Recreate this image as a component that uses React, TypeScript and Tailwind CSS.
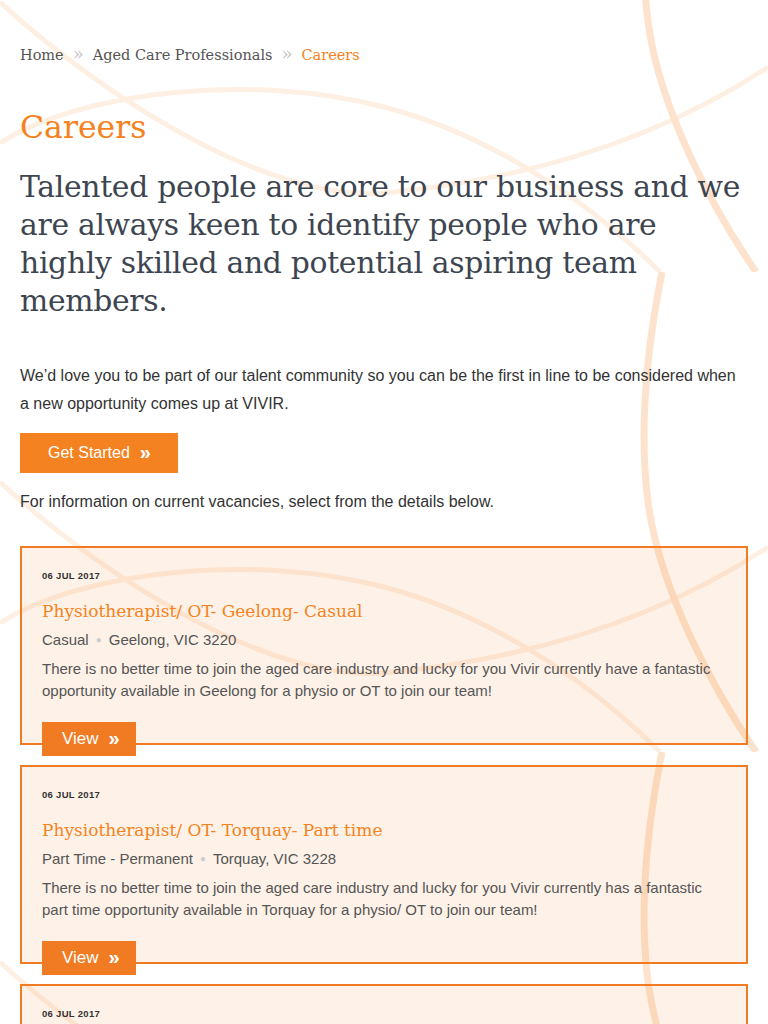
import React from "react";

const slab = "font-['DejaVu_Serif','Liberation_Serif',serif]";
const sans = "font-['Liberation_Sans',Arial,sans-serif]";

interface jobTypes {
  id: number,
  date: string,
  title: string,
  type: string,
  place: string,
  desc: string
}

const jobs: jobTypes[] = [
  {
    id: 1,
    date: "06 Jul 2017",
    title: "Physiotherapist/ OT- Geelong- Casual",
    type: "Casual",
    place: "Geelong, VIC 3220",
    desc: "There is no better time to join the aged care industry and lucky for you Vivir currently have a fantastic opportunity available in Geelong for a physio or OT to join our team!",
  },
  {
    id: 2,
    date: "06 Jul 2017",
    title: "Physiotherapist/ OT- Torquay- Part time",
    type: "Part Time - Permanent",
    place: "Torquay, VIC 3228",
    desc: "There is no better time to join the aged care industry and lucky for you Vivir currently has a fantastic part time opportunity available in Torquay for a physio/ OT to join our team!",
  },
  {
    id: 3,
    date: "06 Jul 2017",
    title: "Physiotherapist/ OT- Colac- Casual",
    type: "Casual",
    place: "Colac, VIC 3250",
    desc: "There is no better time to join the aged care industry and lucky for you Vivir currently have a fantastic opportunity available in Colac for a physio or OT to join our team!",
  },
];

// one 480px tile of the swirly backdrop, repeated down the page
const Tile = ({ y, id }: { y: number, id: string }) => (
  <g transform={`translate(0 ${y})`}>
    <clipPath id={id}>
      <rect x="0" y="0" width="768" height="480" />
    </clipPath>
    <g clipPath={`url(#${id})`} fill="none" strokeLinecap="butt">
      <path d="M0,210 C120,320 280,410 384,401 C500,390 640,360 768,275" stroke="#feefe3" strokeWidth="5" />
      <path d="M0,351 C80,300 250,280 384,315 C480,340 580,400 660,480" stroke="#feefe3" strokeWidth="5" />
      <path d="M662,0 C648,70 638,150 648,230 C660,320 715,420 756,480" stroke="#fde3cd" strokeWidth="7" />
    </g>
  </g>
);

const Backdrop = () => (
  <svg className="absolute top-0 left-0 pointer-events-none" width="768" height="1232" viewBox="0 0 768 1232">
    <Tile y={-208} id="t1" />
    <Tile y={272} id="t2" />
    <Tile y={752} id="t3" />
  </svg>
);

const JobCard = ({ job }: { job: jobTypes }) => {
  return (
    <div className="border-2 border-[#f07b22] bg-[#f58220]/10 px-5 pt-[22px] mb-5">
      <p className={`${sans} text-[9.5px] leading-[12px] font-bold uppercase tracking-[0.3px] text-[#333]`}>{job.date}</p>
      <h3 className={`${slab} mt-[16px] text-[17px] leading-[26px] text-[#f58220]`}>{job.title}</h3>
      <p className={`${sans} mt-[5px] text-[15px] leading-[22px] text-[#555]`}>
        {job.type}
        <span className="text-[#ccc] text-[10px] mx-[7px] align-[2px]">●</span>
        {job.place}
      </p>
      <p className={`${sans} mt-[7px] text-[15px] leading-[22px] text-[#555]`}>{job.desc}</p>
      <div className="mt-[20px] -mb-[13px] w-[94px] h-[34px] bg-[#f07b22] flex items-center pl-5 gap-[10px] text-white">
        <span className={`${sans} text-[17px]`}>View</span>
        <span className={`${sans} text-[20px] font-bold leading-none -mt-[3px]`}>»</span>
      </div>
    </div>
  );
};

const App = () => {
  return (
    <div className="relative w-full min-h-[1024px] overflow-hidden bg-white">
      <Backdrop />

      <div className="relative px-5 pt-[44px] pb-10">
        <nav className={`${slab} flex items-center text-[14.5px] leading-[22px] text-[#555]`}>
          <span>Home</span>
          <span className="mx-[9px] text-[#c4c4c4] text-[18px] -mt-[3px]">»</span>
          <span>Aged Care Professionals</span>
          <span className="mx-[9px] text-[#c4c4c4] text-[18px] -mt-[3px]">»</span>
          <span className="text-[#f58220]">Careers</span>
        </nav>

        <h1 className={`${slab} mt-[41px] text-[31.5px] leading-[40px] text-[#f58220]`}>Careers</h1>

        <h2 className={`${slab} mt-[21px] text-[29.8px] leading-[38px] text-[#3d4550] tracking-[-0.3px]`}>
          Talented people are core to our business and we are always keen to identify people who are highly skilled and potential aspiring team members.
        </h2>

        <p className={`${sans} mt-[42px] text-[16px] leading-[28px] text-[#333]`}>
          We’d love you to be part of our talent community so you can be the first in line to be considered when a new opportunity comes up at VIVIR.
        </p>

        <div className="mt-[15px] w-[158px] h-[40px] bg-[#f58220] flex items-center pl-[28px] gap-[10px] text-white">
          <span className={`${sans} text-[16px]`}>Get Started</span>
          <span className={`${sans} text-[20px] font-bold leading-none -mt-[3px]`}>»</span>
        </div>

        <p className={`${sans} mt-[17px] text-[16px] leading-[24px] text-[#333]`}>
          For information on current vacancies, select from the details below.
        </p>

        <div className="mt-[32px]">
          {jobs.map((job: jobTypes) => (
            <JobCard job={job} key={job.id} />
          ))}
        </div>
      </div>
    </div>
  );
};

export default App;
